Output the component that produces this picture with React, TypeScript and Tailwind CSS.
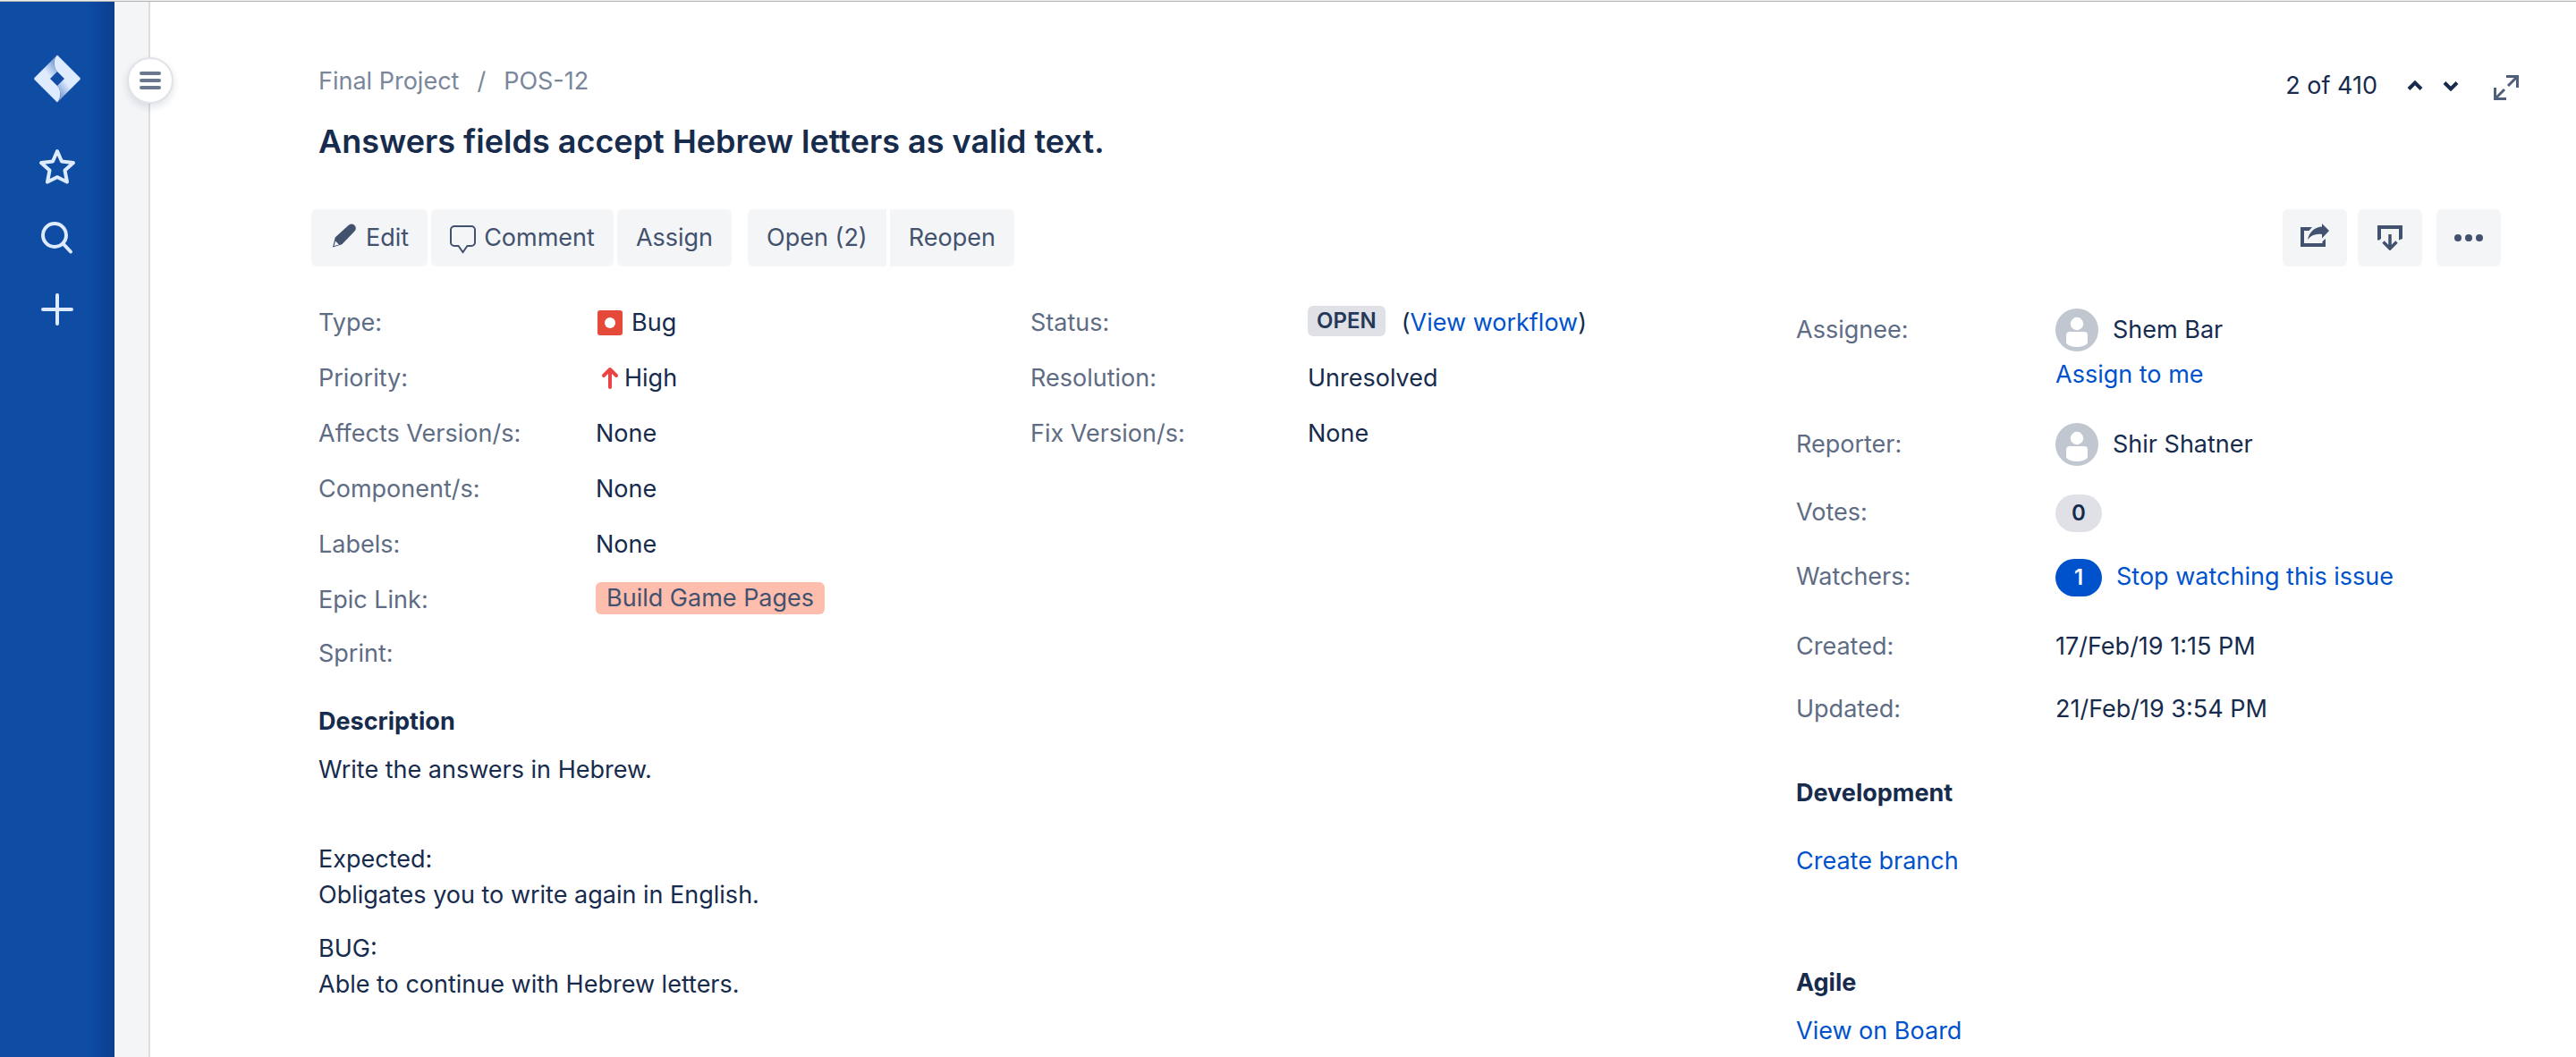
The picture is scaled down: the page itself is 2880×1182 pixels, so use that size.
import React from "react";

type RowProps = { label: string; className?: string; children?: React.ReactNode };

function Field({ label, className = "h-[62px]", children }: RowProps) {
  return (
    <div className={"flex items-start " + className}>
      <dt className="w-[310px] shrink-0 text-[#5e6c84]">{label}</dt>
      <dd className="flex items-center">{children}</dd>
    </div>
  );
}

function SideField({ label, className = "", children }: RowProps) {
  return (
    <div className={"flex items-start " + className}>
      <dt className="w-[290px] shrink-0 text-[#5e6c84]">{label}</dt>
      <dd>{children}</dd>
    </div>
  );
}

function Person({ name }: { name: string }) {
  return (
    <div className="-mt-1 flex items-start gap-4">
      <svg className="size-12" viewBox="0 0 48 48" aria-hidden="true">
        <circle cx="24" cy="24" r="24" fill="#c1c7d0" />
        <circle cx="24" cy="17" r="7.2" fill="#fff" />
        <path d="M12 30a4 4 0 0 1 4-4h16a4 4 0 0 1 4 4v9C32.500 42 28.500 43 24 43s-8.500-1-12-4z" fill="#fff" />
      </svg>
      <span className="pt-1">{name}</span>
    </div>
  );
}

const button = "flex h-16 items-center bg-[#f4f5f7] px-[21px] text-[#42526e]";
const iconButton = "flex h-16 w-[72px] items-center justify-center rounded-md bg-[#f4f5f7]";
const badge = "flex h-[42px] w-[52px] items-center justify-center rounded-full text-[24px] font-semibold";
const link = "text-[#0052cc]";

export default function App() {
  return (
    <div className="flex min-h-screen flex-col bg-white font-['Inter',sans-serif] text-[27px] leading-10 text-[#172b4d]">
      <div className="h-0.5 shrink-0 border-b border-[#b4b4b4] bg-[#ededed]" />
      <div className="flex flex-1">
        <nav className="flex w-32 shrink-0 flex-col items-center bg-[linear-gradient(to_left,#0c3f8c,#0d47a1_20px,#0f4ca3_28px)] pt-[58px] text-[#deebff]">
          <a href="#home" aria-label="Jira">
            <svg className="size-14" viewBox="0 0 56 56">
              <defs>
                <linearGradient id="fadeTop" x1="27" y1="15" x2="17" y2="23" gradientUnits="userSpaceOnUse">
                  <stop offset="0" stopColor="#deebff" stopOpacity="0.6" />
                  <stop offset="1" stopColor="#deebff" />
                </linearGradient>
                <linearGradient id="fadeBottom" x1="29" y1="41" x2="39" y2="33" gradientUnits="userSpaceOnUse">
                  <stop offset="0" stopColor="#deebff" stopOpacity="0.6" />
                  <stop offset="1" stopColor="#deebff" />
                </linearGradient>
              </defs>
              <path d="M28 1.500 C23.500 6 23 13 28 20 L20 28 L28 36 C33 42 32 50 28 54.500 L2.500 29 Q1.500 28 2.500 27 Z" fill="url(#fadeTop)" />
              <path d="M28 1.500 L53.500 27 Q54.500 28 53.500 29 L28 54.500 C32.500 50 33 43 28 36 L36 28 L28 20 C23 13 24 6 28 1.500 Z" fill="url(#fadeBottom)" />
            </svg>
          </a>
          <button className="mt-[46px]" aria-label="Starred">
            <svg className="size-12" viewBox="0 0 48 48" fill="none" stroke="currentColor" strokeWidth="4" strokeLinejoin="round">
              <path d="M24 7l5 11.500 13 1.500-9.500 8.500 2.500 13-11-5.500-11 5.500 2.500-13L6 20l13-1.500z" />
            </svg>
          </button>
          <button className="mt-8" aria-label="Search">
            <svg className="size-12" viewBox="0 0 48 48" fill="none" stroke="currentColor" strokeWidth="4" strokeLinecap="round">
              <circle cx="21" cy="21" r="13" />
              <path d="M31 31l8 8.500" />
            </svg>
          </button>
          <button className="mt-8" aria-label="Create">
            <svg className="size-12" viewBox="0 0 48 48" fill="none" stroke="currentColor" strokeWidth="4" strokeLinecap="round">
              <path d="M24 8v32M8 24h32" />
            </svg>
          </button>
        </nav>

        <div className="relative w-10 shrink-0 border-r-2 border-[#dcdddf] bg-[#f4f5f7]">
          <button
            aria-label="Expand navigation"
            className="absolute top-[62px] left-[14px] flex size-[52px] flex-col items-center justify-center gap-1 rounded-full border-2 border-[#e2e3e8] bg-white shadow-[0_4px_8px_rgba(9,30,66,0.12)]"
          >
            <span className="h-1 w-6 rounded-full bg-[#6b778c]" />
            <span className="h-1 w-6 rounded-full bg-[#6b778c]" />
            <span className="h-1 w-6 rounded-full bg-[#6b778c]" />
          </button>
        </div>

        <main className="min-w-0 flex-1 pt-[69px] pr-[84px] pl-[188px]">
          <header className="flex items-start justify-between">
            <div>
              <nav className="flex gap-5 text-[#7a869a]">
                <a href="#project">Final Project</a>
                <span>/</span>
                <a href="#issue">POS-12</a>
              </nav>
              <h1 className="mt-5 text-[36px] leading-[55px] font-semibold">Answers fields accept Hebrew letters as valid text.</h1>
            </div>
            <div className="mt-[5px] -mr-5 flex items-center">
              <span>2 of 410</span>
              <button className="ml-8" aria-label="Previous issue">
                <svg className="h-4 w-5" viewBox="0 0 20 16" fill="none" stroke="currentColor" strokeWidth="4"><path d="M3 11.500L10 4.500L17 11.500" /></svg>
              </button>
              <button className="ml-5" aria-label="Next issue">
                <svg className="h-4 w-5" viewBox="0 0 20 16" fill="none" stroke="currentColor" strokeWidth="4"><path d="M3 4.500L10 11.500L17 4.500" /></svg>
              </button>
              <button className="mt-1 ml-[38px] text-[#505f79]" aria-label="Full screen">
                <svg className="size-7" viewBox="0 0 28 28" fill="none" stroke="currentColor" strokeWidth="3">
                  <path d="M14 1.500h12.500V14M26 2L16 12M1.500 14v12.500H14M2 26l10-10" />
                </svg>
              </button>
            </div>
          </header>

          <div className="mt-12 -ml-2 flex items-center justify-between">
            <div className="flex">
              <button className={button + " rounded-md"}>
                <svg className="mr-1 size-9" viewBox="0 0 36 36" aria-hidden="true">
                  <path d="M20.500 4a4.700 4.700 0 0 1 7 6.500L13.300 25.300 3 28.500l2.700-11z" fill="currentColor" />
                  <path d="M6 21.500l4 4-5.500 1.500z" fill="#f4f5f7" />
                </svg>
                Edit
              </button>
              <button className={button + " ml-1 rounded-md"}>
                <svg className="mr-2 h-9 w-[30px]" viewBox="0 0 30 36" fill="none" stroke="currentColor" strokeWidth="2" aria-hidden="true">
                  <path d="M5 5h19a4 4 0 0 1 4 4v14a4 4 0 0 1-4 4h-4.500l-5 7-5-7H5a4 4 0 0 1-4-4V9a4 4 0 0 1 4-4z" />
                </svg>
                Comment
              </button>
              <button className={button + " ml-1 rounded-md"}>Assign</button>
              <button className={button + " ml-[18px] rounded-l-md"}>Open (2)</button>
              <button className={button + " ml-1 rounded-r-md"}>Reopen</button>
            </div>
            <div className="flex text-[#42526e]">
              <button className={iconButton} aria-label="Share">
                <svg className="size-8" viewBox="0 0 32 32" fill="currentColor">
                  <path d="M0 4h13l-3.500 4H4v14h20.500v-2l3.500-3v9H0z" />
                  <path d="M8 18C10 9 16 4 24 3.500V0l8 8-8 8.500V12C17 11 12 13 8 18z" />
                </svg>
              </button>
              <button className={iconButton + " ml-3"} aria-label="Export">
                <svg className="size-7" viewBox="0 0 28 28" fill="currentColor">
                  <path d="M0 0h28v15l-4 1.500V4H4v11l-2 1.500H0z" />
                  <path d="M14 10v16M6.500 18.500l7.500 7.500 7.500-7.500" fill="none" stroke="currentColor" strokeWidth="3.500" strokeLinecap="butt" />
                </svg>
              </button>
              <button className={iconButton + " ml-4 gap-1"} aria-label="More">
                <span className="size-2 rounded-full bg-[#42526e]" />
                <span className="size-2 rounded-full bg-[#42526e]" />
                <span className="size-2 rounded-full bg-[#42526e]" />
              </button>
            </div>
          </div>

          <div className="mt-[43px] grid grid-cols-[1652fr_788fr]">
            <div>
              <div className="grid grid-cols-[796fr_856fr]">
                <dl>
                  <Field label="Type:">
                    <svg className="mr-2.5 ml-0.5 size-7" viewBox="0 0 28 28" aria-hidden="true">
                      <rect width="28" height="28" rx="3" fill="#e5493a" />
                      <circle cx="14" cy="14" r="6" fill="#fff" />
                    </svg>
                    Bug
                  </Field>
                  <Field label="Priority:">
                    <svg className="h-7 w-8" viewBox="0 0 32 28" fill="none" stroke="#ea4447" strokeWidth="4" strokeLinecap="round" strokeLinejoin="round" aria-hidden="true">
                      <path d="M16 24V4M9 11l7-7 7 7" />
                    </svg>
                    High
                  </Field>
                  <Field label="Affects Version/s:">None</Field>
                  <Field label="Component/s:">None</Field>
                  <Field label="Labels:">None</Field>
                  <Field label="Epic Link:" className="h-15">
                    <a href="#epic" className="rounded-md bg-[#ffbdad] px-3 leading-9 text-[#42526e]">Build Game Pages</a>
                  </Field>
                  <Field label="Sprint:" />
                </dl>
                <dl>
                  <Field label="Status:">
                    <span className="-mt-1 mr-[18px] rounded-md bg-[#dfe1e6] px-2.5 text-[24px] leading-[34px] font-semibold text-[#253858]">OPEN</span>
                    (<a href="#workflow" className={link}>View workflow</a>)
                  </Field>
                  <Field label="Resolution:">Unresolved</Field>
                  <Field label="Fix Version/s:">None</Field>
                </dl>
              </div>
              <section className="mt-[14px]">
                <h2 className="font-bold">Description</h2>
                <p className="mt-[14px]">Write the answers in Hebrew.</p>
                <p className="mt-[60px]">Expected:<br />Obligates you to write again in English.</p>
                <p className="mt-5">BUG:<br />Able to continue with Hebrew letters.</p>
              </section>
            </div>

            <aside className="pt-2">
              <dl>
                <SideField label="Assignee:" className="h-32">
                  <Person name="Shem Bar" />
                  <a href="#assign" className={"mt-1.5 block " + link}>Assign to me</a>
                </SideField>
                <SideField label="Reporter:" className="h-[76px]">
                  <Person name="Shir Shatner" />
                </SideField>
                <SideField label="Votes:" className="h-[72px]">
                  <span className={badge + " bg-[#dfe1e6]"}>0</span>
                </SideField>
                <SideField label="Watchers:" className="h-[78px]">
                  <div className="flex items-start gap-4">
                    <span className={badge + " bg-[#0052cc] text-white"}>1</span>
                    <a href="#watch" className={link}>Stop watching this issue</a>
                  </div>
                </SideField>
                <SideField label="Created:" className="h-[70px]">17/Feb/19 1:15 PM</SideField>
                <SideField label="Updated:" className="h-[70px]">21/Feb/19 3:54 PM</SideField>
              </dl>
              <section className="mt-6">
                <h2 className="font-bold">Development</h2>
                <a href="#branch" className={"mt-9 block " + link}>Create branch</a>
              </section>
              <section className="mt-24">
                <h2 className="font-bold">Agile</h2>
                <a href="#board" className={"mt-[14px] block " + link}>View on Board</a>
              </section>
            </aside>
          </div>
        </main>
      </div>
    </div>
  );
}
